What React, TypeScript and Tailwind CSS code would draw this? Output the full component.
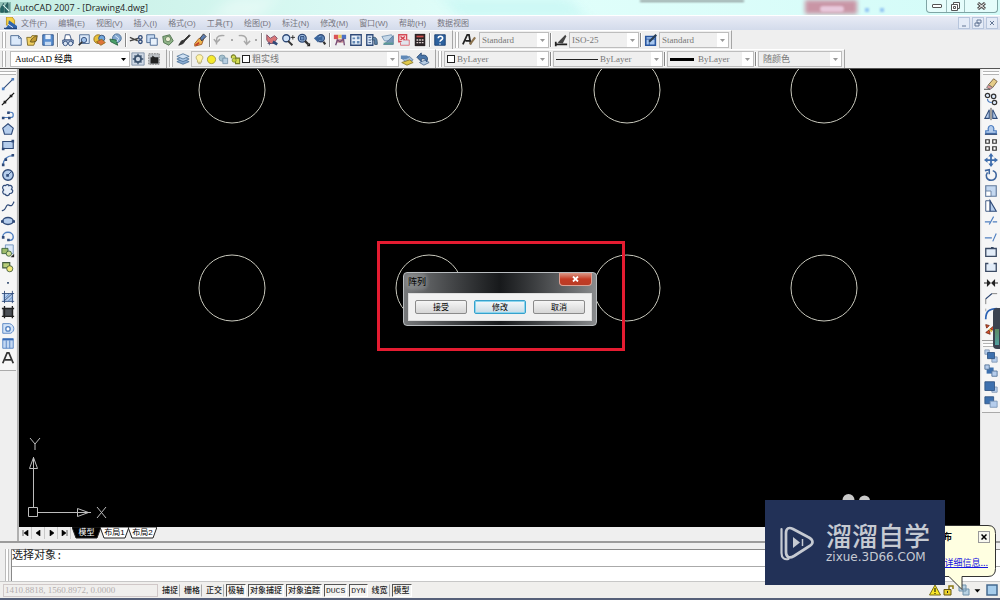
import type { ReactNode } from "react";

const N = "#2f4a78";
const B = "#4f7fc0";
const L = "#b5cdec";

const glyphs: Record<string, ReactNode> = {
  new: <path d="M2 3h9l3 3v8H2z M11 3v3h3" fill="#dbe9fa" stroke="#44648f" />,
  open: (
    <>
      <path d="M2 5h5l1-2h5v3l-3 8H3z" fill="#f0cf62" stroke="#7b6722" />
      <path d="M6 10c2-5 5-6 8-7l-1 6c-2 1-4 2-7 1z" fill="#c29b33" stroke="#5d4d18" />
    </>
  ),
  save: (
    <>
      <path d="M2 2h12v12H2z" fill="#5a8fd0" stroke="#284f85" />
      <path d="M5 2h6v5H5z" fill="#e8f1fb" />
      <path d="M4.500 10h7v4h-7z" fill="#c7daf0" />
    </>
  ),
  print: (
    <>
      <path d="M5 2h5l2 6H4z" fill="#fff" stroke={N} />
      <path d="M2 8h12v4H2z" fill="#a9bcd9" stroke={N} />
      <circle cx="5" cy="12" r="2.500" fill="#dbe5f3" stroke={N} />
      <circle cx="11" cy="12" r="2.500" fill="#dbe5f3" stroke={N} />
    </>
  ),
  preview: (
    <>
      <path d="M3 2h11v10H3z" fill="#dbe8f8" stroke="#47658f" />
      <circle cx="8" cy="8" r="3" fill="#9fc0e8" stroke={N} />
      <path d="M6 10l-4 4" stroke="#333" strokeWidth="2" />
    </>
  ),
  publish: (
    <>
      <circle cx="6" cy="7" r="5" fill="#e9c23b" stroke="#8f6a1c" />
      <circle cx="10" cy="6" r="3.500" fill="#72a7dc" stroke={N} />
      <path d="M4 10l5 4 5-3-4-4z" fill="#df7438" stroke="#8f6a1c" />
    </>
  ),
  dwf: (
    <>
      <circle cx="9" cy="6" r="5" fill="#82a7cf" stroke="#476c93" />
      <path d="M1 7l7 1 2 6-8-4z" fill="#4b9f69" stroke="#286341" />
      <path d="M7 3l4 3-2 4" stroke="#dfedfa" fill="none" />
    </>
  ),
  cut: (
    <>
      <path d="M1 5l9 4M1 9l10-3" stroke="#444" strokeWidth="1.500" />
      <circle cx="13" cy="5" r="2" fill="none" stroke={N} strokeWidth="1.500" />
      <circle cx="13" cy="10" r="2" fill="none" stroke={N} strokeWidth="1.500" />
    </>
  ),
  copy: (
    <>
      <path d="M2 2h9v9H2z" fill="#c9dcf3" stroke="#44648f" />
      <path d="M6 6h8v8H6z" fill="#e8f1fb" stroke="#44648f" />
    </>
  ),
  paste: (
    <>
      <path d="M2 4l8-2 4 7-5 5-6-3z" fill="#8eb387" stroke="#4c6e4a" />
      <circle cx="8" cy="7" r="3" fill="#e8ecd1" stroke="#5d7b57" />
    </>
  ),
  match: <path d="M14 2L8 8l-3 1-3 5 5-2 2-3 6-6z" fill="#333" stroke="#333" />,
  block: (
    <>
      <path d="M2 12l5-6 5 1-2 6-8 2z" fill="#edb44d" stroke="#9a5422" />
      <path d="M8 6l4-5 3 3-5 5z" fill="#5c7db2" stroke="#333" />
      <path d="M3 14l4-3" stroke="#c53b29" strokeWidth="2" />
    </>
  ),
  undo: <path d="M4 13V8c0-4 4-6 9-5M1 7l3 4 4-4" stroke="#a8a8a8" strokeWidth="1.700" fill="none" />,
  redo: <path d="M2 3c6-1 9 1 9 6v4M8 9l3 4 4-4" stroke="#a8a8a8" strokeWidth="1.700" fill="none" />,
  pan: (
    <>
      <path d="M2 2l4 4 5-3 3 3-4 6H5L2 8z" fill="#d97778" stroke="#7b4f68" />
      <path d="M9 10l5 3" stroke={N} strokeWidth="3" />
      <path d="M3 12h4M5 10v4" stroke="#557" />
    </>
  ),
  zoomrt: (
    <>
      <circle cx="6" cy="6" r="4" fill="#cfe2f8" stroke={N} strokeWidth="1.500" />
      <path d="M8 9l5 5" stroke="#333" strokeWidth="2.200" />
      <path d="M11 5h5M13.500 2.500v5" stroke="#222" />
    </>
  ),
  zoomwin: (
    <>
      <circle cx="6" cy="6" r="4.500" fill="#a8c6e9" stroke={N} strokeWidth="1.500" />
      <path d="M4 4h4v4H4z" fill="#6f93c4" stroke={N} />
      <path d="M9 9l4 4" stroke="#333" strokeWidth="2.500" />
      <path d="M11 15h4v-4z" />
    </>
  ),
  zoomprev: (
    <>
      <circle cx="9" cy="6" r="4" fill="#83abd9" stroke={N} strokeWidth="1.500" />
      <path d="M12 10l2 3" stroke="#333" strokeWidth="2.500" />
      <path d="M1 6l5-4v3l5-2v6L6 8v3z" fill="#3d679d" />
    </>
  ),
  props: (
    <>
      <path d="M1 2h5v5H1z" fill="#d95357" />
      <path d="M6 2h4v4H6z" fill="#e8c657" />
      <path d="M10 2h5v5h-5z" fill="#4e71c2" />
      <path d="M4 7h8v4H4z" fill="#c98a8e" />
      <path d="M3 14l2-6 3 2 4-3 1 7" stroke="#744b75" strokeWidth="1.500" fill="none" />
    </>
  ),
  dc: (
    <>
      <path d="M2 2h12v12H2z" fill="#e9f1fa" stroke={N} strokeWidth="1.500" />
      <path d="M4 5h3v2H4zM4 9h3v3H4zM9 4h3v3H9zM9 9h3v3H9z" fill="#6489b4" />
    </>
  ),
  palette: (
    <>
      <path d="M2 2h7v12H2z" fill="#dceafa" stroke={N} strokeWidth="1.500" />
      <path d="M4 5h3M4 8h3M4 11h3" stroke={N} />
      <path d="M9 5c5-1 5 4 5 8h-3V8H8z" fill="#6186ad" stroke="#34506d" />
    </>
  ),
  sheet: (
    <>
      <path d="M1 4l11-2 2 4-5 3H4z" fill="#c5d8e8" stroke="#7393b2" />
      <path d="M14 3v10H3l5-4z" fill="#7998b8" stroke="#54779b" />
      <path d="M3 12h11" stroke="#5c9b93" strokeWidth="2" />
    </>
  ),
  markup: (
    <>
      <path d="M2 2h9v8H2z" fill="#f8dfe1" stroke="#d34b57" strokeWidth="1.500" />
      <path d="M4 4l5 4M9 4L4 8" stroke="#d13c4a" strokeWidth="1.500" />
      <path d="M7 8h7v6H4v-3" fill="#e1e5ed" stroke="#dc6871" />
    </>
  ),
  calc: (
    <>
      <path d="M2 1h12v14H2z" fill="#2b2426" />
      <path d="M4 3h8v2H4z" fill="#c94b4a" />
      <path d="M4 8h8M4 11h8" stroke="#e2d5d5" strokeWidth="1.500" strokeDasharray="2 1" />
    </>
  ),
  help: (
    <>
      <path d="M2 2h12v12H2z" fill="#2d629f" stroke="#183e6f" />
      <path d="M6 6c0-3 5-3 5 0 0 2-3 2-3 4M8 12v1" fill="none" stroke="#fff" strokeWidth="1.800" />
    </>
  ),
  textstyle: (
    <>
      <path d="M1 13L6 2h2l2 11M4 9h5" stroke="#222" strokeWidth="2" fill="none" />
      <path d="M9 13l6-8" stroke="#8d7450" strokeWidth="2.500" />
    </>
  ),
  dimstyle: (
    <>
      <path d="M1 13h14M2 10v5" stroke="#222" strokeWidth="2" />
      <path d="M4 11l9-9 1 2-4 8z" fill="#444" />
    </>
  ),
  tablestyle: (
    <>
      <path d="M2 4h11v10H2z" fill="#a9c8f0" stroke="#2a57a0" strokeWidth="1.800" />
      <path d="M2 7h11M6 7v7" stroke="#2a57a0" />
      <path d="M6 10l8-8" stroke="#253c55" strokeWidth="2.500" />
    </>
  ),
  gear: (
    <>
      <path d="M1 1h14v14H1z" fill="#ced8e5" stroke="#7c8ea5" />
      <circle cx="8" cy="8" r="3.500" fill="none" stroke="#3b526d" strokeWidth="2" />
      <path d="M8 2v3M8 11v3M2 8h3M11 8h3M4 4l2 2M10 10l2 2M12 4l-2 2M6 10l-2 2" stroke="#3b526d" strokeWidth="1.500" />
    </>
  ),
  workspace: (
    <>
      <path d="M2 2h12v12H2z" fill="#bfc3c8" stroke="#777" strokeDasharray="2 1" />
      <path d="M4 6h2V4l3 2h4v7H4z" fill="#222" />
    </>
  ),
  layers: (
    <>
      <path d="M1 11l7-3 7 3-7 3z" fill="#89abd2" stroke="#54789e" />
      <path d="M1 8l7-3 7 3-7 3z" fill="#a9c5e4" stroke="#54789e" />
      <path d="M1 5l7-3 7 3-7 3z" fill="#d0e1f3" stroke="#54789e" />
    </>
  ),
  layerprev: (
    <>
      <path d="M3 8l8-3 4 4-7 4z" fill="#9db8d6" stroke="#6180a3" />
      <path d="M2 12l9-3 4 3-7 3z" fill="#e1c949" stroke="#887a32" />
      <path d="M1 4h7l3 2-4 2H1z" fill="#6089b7" />
    </>
  ),
  layerback: (
    <>
      <path d="M4 12l7-3 4 3-6 3z" fill="#b8cde4" stroke="#526e92" />
      <path d="M1 6l5-5v3c6-2 9 3 6 7-1-3-3-4-6-3v3z" fill="#4975a8" stroke="#2a4b77" />
    </>
  ),
  bulb: <path d="M5 12V9C1 5 4 1 8 1s7 4 3 8v3zM6 14h4" fill="#fff4a6" stroke="#a6984c" />,
  sun: <circle cx="8" cy="8" r="6" fill="#f5e92c" stroke="#898236" />,
  vpfreeze: (
    <>
      <circle cx="6" cy="6" r="4.500" fill="#a7c2cf" stroke="#6f8d9f" />
      <path d="M7 6h7v8H7z" fill="#b8cfe1" stroke="#65859f" />
    </>
  ),
  lock: (
    <>
      <path d="M2 6V3c3-3 6-2 7 3M8 6h6v8H8z" fill="#d5dd55" stroke="#737c22" strokeWidth="1.500" />
      <circle cx="6" cy="9" r="3" fill="#c7d341" stroke="#768023" />
    </>
  ),
  line: <><path d="M3 13L13 3" stroke={N} strokeWidth="1.300" /><path d="M1 12h3v3H1zM12 1h3v3h-3z" fill={B} /></>,
  xline: <><path d="M1 15L15 1" stroke="#111" strokeWidth="1.500" /><path d="M3 10h3v3H3zM10 3h3v3h-3z" fill="#222" /></>,
  pline: <><path d="M2 12h9c4 0 4-6 0-6H8" stroke={B} strokeWidth="1.400" fill="none" /><path d="M1 11h3v3H1zM8 11h3v3H8zM7 5h3v3H7z" fill={N} /></>,
  polygon: <path d="M8 2l6 5-2 7H4L2 7z" fill={L} stroke={N} strokeWidth="1.300" />,
  rect: <><path d="M2 4h12v8H2z" fill={L} stroke={N} strokeWidth="1.300" /><path d="M1 11h3v3H1zM12 2h3v3h-3z" fill={N} /></>,
  arc: <><path d="M2 14C3 7 7 3 14 3" stroke={B} strokeWidth="1.300" fill="none" /><path d="M1 12h3v3H1zM4 6h3v3H4zM12 1h3v3h-3z" fill={N} /></>,
  circle: <><circle cx="8" cy="8" r="6" fill={L} stroke={N} strokeWidth="1.500" /><path d="M8 8l4-4" stroke={N} /><path d="M6 7h3v3H6z" fill={N} /></>,
  cloud: <path d="M5 3c2-2 4-1 4 0 3-1 5 2 3 4 3 2 1 5-2 5-1 3-4 3-5 1-3 0-4-3-2-5C0 5 3 2 5 3z" fill="#e8eff9" stroke={N} strokeWidth="1.400" />,
  spline: <path d="M1 13c5 2 4-8 8-6s4-1 6-4" stroke={N} strokeWidth="1.300" fill="none" />,
  ellipse: <><ellipse cx="8" cy="8" rx="6" ry="4" fill={L} stroke={N} strokeWidth="1.600" /><path d="M0 7h3v3H0zM13 7h3v3h-3z" fill={N} /></>,
  earc: <><path d="M2 9c0-7 12-7 12 0 0 3-2 4-5 4" stroke={B} strokeWidth="1.600" fill="none" /><path d="M1 8h3v3H1zM7 11h3v3H7z" fill={N} /></>,
  insert: <><path d="M5 1h9v10H5z" fill="#dce9f9" stroke="#6c8fb8" /><path d="M1 5h7v6H1z" fill="#9dbb6b" stroke="#3c613b" /><circle cx="9" cy="11" r="3" fill="#d1df97" stroke="#3c613b" /><path d="M11 15h4v-4z" /></>,
  makeblock: <><path d="M2 3h8v6H2z" fill="#b8ce78" stroke="#405c3c" strokeWidth="1.300" /><circle cx="10" cy="10" r="3.500" fill="#f1e879" stroke="#405c3c" /></>,
  point: <path d="M7 8h2v2H7z" fill="#334b70" />,
  hatch: <><path d="M2 4h12v9H2z" fill={L} /><path d="M4 1v14M13 1v14M1 4h14M1 13h14M3 13L13 4" stroke={N} /><path d="M5 9l5-5M8 13l5-5" stroke={B} /></>,
  gradient: <><path d="M2 4h12v9H2z" fill="#4b4f55" /><path d="M4 1v14M13 1v14M1 4h14M1 13h14" stroke="#222" strokeWidth="1.500" /></>,
  region: <><path d="M2 3h8c6 2 6 9 1 11H2z" fill="#d3e3f7" stroke={B} /><circle cx="8" cy="9" r="2.500" fill="#fff" stroke={B} strokeWidth="1.500" /></>,
  table: <><path d="M2 3h12v11H2z" fill="#c4d8f2" stroke={B} /><path d="M2 4h12" stroke="#386bb6" strokeWidth="2" /><path d="M6 5v9M10 5v9" stroke={B} /></>,
  text: <path d="M2 14L7 2h2l5 12M4.500 10h7" stroke="#333" strokeWidth="2" fill="none" />,
  erase: <><path d="M5 9l5 3 5-7-4-3z" fill="#e5cc87" stroke="#745e3d" /><path d="M5 9l5 3-3 2-4-2z" fill="#de9a9a" stroke="#777" /><path d="M0 14h7" stroke="#333" /></>,
  cpy: <><circle cx="4" cy="4" r="2.500" fill="#dce9f9" stroke="#333" strokeWidth="1.400" /><circle cx="11" cy="5" r="2.500" fill="#dce9f9" stroke="#333" strokeWidth="1.400" /><circle cx="12" cy="12" r="2.500" fill="#dce9f9" stroke="#333" strokeWidth="1.400" /><path d="M4 8c0 3 2 4 5 4" fill="none" stroke={B} strokeWidth="1.400" /></>,
  mirror: <><path d="M6 3v10H1zM10 3v10h5z" fill={L} stroke={N} strokeWidth="1.200" /><path d="M8 1v14" stroke="#333" /></>,
  offset: <><path d="M2 13h12v-3h-3c2-8-8-8-6 0H2z" fill={L} stroke={B} strokeWidth="1.400" /><path d="M1 14h14" stroke={N} strokeWidth="1.500" /></>,
  array: <path d="M2 2h4v4H2zM10 2h4v4h-4zM2 10h4v4H2zM10 10h4v4h-4z" fill="#fff" stroke="#333" strokeWidth="1.400" />,
  move: <path d="M8 0l3 4H9v3h3V5l4 3-4 3V9H9v3h2l-3 4-3-4h2V9H4v2L0 8l4-3v2h3V4H5z" fill="#3e6dac" />,
  rotate: <path d="M4 5c-3 4-1 9 4 9 7 0 8-9 2-11M1 3l5-1v5" stroke="#3d659e" strokeWidth="1.800" fill="none" />,
  scale: <><path d="M2 2h12v12H2z" fill="#c4d8f0" stroke="#60799b" strokeWidth="1.300" /><path d="M2 8h6v6H2z" fill="#fff" stroke="#60799b" /></>,
  stretch: <><path d="M2 2h5v12H2z" fill="#fff" stroke={N} /><path d="M7 2l7 12H7z" fill={L} stroke={N} strokeWidth="1.300" /></>,
  trim: <path d="M1 9h6M10 9h5M6 12l5-9" stroke={B} strokeWidth="1.300" />,
  extend: <path d="M1 9h8M10 13l4-9" stroke={B} strokeWidth="1.300" />,
  breakpt: <path d="M2 4h12v9H2zM8 3h3" fill="#e2ecf8" stroke="#3b4a63" strokeWidth="1.500" />,
  brk: <path d="M5 4H2v9h12V4h-3" fill="#e2ecf8" stroke="#3b4a63" strokeWidth="1.500" />,
  join: <path d="M0 8h5M11 8h5M4 5l3 3-3 3zM12 5L9 8l3 3z" stroke="#222" strokeWidth="1.300" />,
  chamfer: <><path d="M2 15V9l7-6h6" stroke="#777" fill="none" /><path d="M2 9l7-6" stroke={N} strokeWidth="1.500" /></>,
  fillet: <><path d="M2 15C2 6 6 3 15 3" stroke="#2b62b4" strokeWidth="2" fill="none" /><path d="M2 3v3" stroke="#999" /></>,
  explode: <><path d="M2 12l4-3 1 5zM7 8l7-6-2 8zM2 3l4 1-3 3z" fill="#db4d27" stroke="#742d1c" /><path d="M6 8l3 3" stroke="#dfad34" strokeWidth="2" /></>,
  order1: <><path d="M9 9h6v6H9zM1 1h5v5H1z" fill={L} stroke="#8297b2" /><path d="M4 4h8v7H4z" fill="#3d70ae" stroke="#315584" /></>,
  order2: <><path d="M3 4h8v7H3z" fill="#3d70ae" /><path d="M1 1h5v5H1zM9 8h6v6H9z" fill={L} stroke="#527297" /></>,
  order3: <><path d="M9 8h6v6H9z" fill={L} stroke="#8297b2" /><path d="M1 2h11v10H1z" fill="#3d70ae" stroke="#315584" /></>,
  order4: <><path d="M1 2h10v8H1z" fill="#3d70ae" stroke="#315584" /><path d="M7 7h8v7H7z" fill={L} stroke="#7894b5" /></>,
};

function Tool({ name, label }: { name: string; label: string }) {
  return (
    <button type="button" aria-label={label} className="flex h-[15px] w-4 shrink-0 items-center justify-center">
      <svg viewBox="0 0 16 16" className="size-3.5" fill="#222" aria-hidden="true">
        {glyphs[name]}
      </svg>
    </button>
  );
}

const Sep = () => <span className="mx-px h-3.5 w-0.5 shrink-0 border-r border-white bg-[#888]" />;
const Grip = () => <span className="mr-0.5 h-4 w-1 shrink-0 border-x border-[#b4b4b4] bg-white" />;

function Bar({ children }: { children: ReactNode }) {
  return (
    <div className="flex h-[19px] shrink-0 items-center border-t border-r border-t-white border-r-[#a5a5a5] pl-0.5">
      <Grip />
      {children}
    </div>
  );
}

function Combo(props: { label: string; value: string; width: string; lead?: ReactNode; dark?: boolean; cjk?: boolean }) {
  const tone = props.dark ? "bg-white text-black" : "bg-[#efefef] text-[#777]";
  const face = props.cjk ? "font-['Noto_Sans_CJK_SC',sans-serif] text-[9px]" : "font-['Liberation_Serif','Noto_Sans_CJK_SC',serif] text-[9px]";
  return (
    <label className={`flex h-4 shrink-0 items-center border border-[#bdbdbd] pl-0.5 ${tone} ${props.width}`}>
      {props.lead}
      <select aria-label={props.label} className={`h-3.5 min-w-0 flex-1 appearance-none bg-transparent leading-[14px] outline-none ${face}`}>
        <option>{props.value}</option>
      </select>
      <span className="flex h-3.5 w-[11px] items-center justify-center bg-white">
        <svg viewBox="0 0 5 3" className="h-[3px] w-[5px]" fill={props.dark ? "#000" : "#999"} aria-hidden="true">
          <path d="M0 0h5L2.500 3z" />
        </svg>
      </span>
    </label>
  );
}

const menus = ["文件(F)", "编辑(E)", "视图(V)", "插入(I)", "格式(O)", "工具(T)", "绘图(D)", "标注(N)", "修改(M)", "窗口(W)", "帮助(H)", "数据视图"];
const std1 = [["new", "新建"], ["open", "打开"], ["save", "保存"]];
const std2 = [["print", "打印"], ["preview", "打印预览"], ["publish", "发布"], ["dwf", "三维 DWF"]];
const std3 = [["cut", "剪切"], ["copy", "复制"], ["paste", "粘贴"], ["match", "特性匹配"], ["block", "块编辑器"]];
const std4 = [["pan", "平移"], ["zoomrt", "实时缩放"], ["zoomwin", "窗口缩放"], ["zoomprev", "缩放上一个"]];
const std5 = [["props", "特性"], ["dc", "设计中心"], ["palette", "工具选项板"], ["sheet", "图纸集"], ["markup", "标记集"], ["calc", "计算器"]];
const draw = [["line", "直线"], ["xline", "构造线"], ["pline", "多段线"], ["polygon", "正多边形"], ["rect", "矩形"], ["arc", "圆弧"], ["circle", "圆"], ["cloud", "修订云线"], ["spline", "样条曲线"], ["ellipse", "椭圆"], ["earc", "椭圆弧"], ["insert", "插入块"], ["makeblock", "创建块"], ["point", "点"], ["hatch", "图案填充"], ["gradient", "渐变色"], ["region", "面域"], ["table", "表格"], ["text", "多行文字"]];
const modify = [["erase", "删除"], ["cpy", "复制对象"], ["mirror", "镜像"], ["offset", "偏移"], ["array", "阵列"], ["move", "移动"], ["rotate", "旋转"], ["scale", "缩放"], ["stretch", "拉伸"], ["trim", "修剪"], ["extend", "延伸"], ["breakpt", "打断于点"], ["brk", "打断"], ["join", "合并"], ["chamfer", "倒角"], ["fillet", "圆角"], ["explode", "分解"]];
const order = [["order1", "前置"], ["order2", "后置"], ["order3", "置于对象之上"], ["order4", "置于对象之下"]];
const modes: [string, boolean][] = [["捕捉", false], ["栅格", false], ["正交", false], ["极轴", true], ["对象捕捉", true], ["对象追踪", true], ["DUCS", true], ["DYN", true], ["线宽", false], ["模型", true]];

const Tools = ({ items }: { items: string[][] }) => (
  <>
    {items.map(([name, label]) => (
      <Tool key={name} name={name} label={label} />
    ))}
  </>
);

const Swatch = () => <span className="mr-0.5 size-2 shrink-0 border border-[#222] bg-white" />;
const HGrip = () => <span className="mb-px h-1 w-4 shrink-0 border-y border-[#b4b4b4] bg-white" />;

function TitleBar() {
  return (
    <header className="relative flex h-[15px] shrink-0 items-center overflow-hidden bg-linear-to-r from-[#c6eee4] via-[#e2fffb] to-[#d3fbf8]">
      <span className="absolute top-0 left-[22%] h-4 w-12 -skew-x-[40deg] bg-white/50 blur-sm" />
      <span className="absolute top-0 left-[45%] h-4 w-32 skew-x-[40deg] bg-[#c5f6f3] blur-sm" />
      <span className="absolute top-0 left-[64%] h-0.5 w-26 bg-[#8b9695] blur-[1px]" />
      <span className="absolute top-0 left-[80.5%] h-3.5 w-[52px] bg-[#c995a5] blur-[2px]" />
      <span className="absolute top-1.5 left-[82%] h-1.5 w-6 rounded bg-[#e8c9dc] blur-[1px]" />
      <span className="absolute top-2 left-[86.500%] size-1 bg-[#93c4f2] blur-[1px]" />
      <span className="absolute top-2 left-[88%] size-1 bg-[#93c4f2] blur-[1px]" />
      <svg viewBox="0 0 16 16" className="relative size-[11px]" aria-hidden="true">
        <path d="M0 0h16v16H0z" fill="#8fc0b5" />
        <path d="M1 15V9l4-7v13zM7 15V7l4-6v14zM13 2v13" fill="#266a68" stroke="#17484b" />
        <path d="M4 4l9 9" stroke="#e9fff9" strokeWidth="1.500" />
      </svg>
      <h1 className="relative ml-[3px] flex-1 font-['Open_Sans',sans-serif] text-[9px] leading-[15px] text-[#222]">AutoCAD 2007 - [Drawing4.dwg]</h1>
      <div className="relative mr-0.5 flex h-[13px] self-start rounded-b border border-t-0 border-[#7fa5a5] bg-white/40">
        <button type="button" aria-label="最小化" className="flex w-5 items-center justify-center border-r border-[#9bbcbc]">
          <span className="h-1 w-2.5 rounded-[1px] border border-[#555] bg-white" />
        </button>
        <button type="button" aria-label="还原" className="flex w-[18px] items-center justify-center border-r border-[#9bbcbc]">
          <svg viewBox="0 0 9 9" className="size-[9px]" fill="#fff" stroke="#555" aria-hidden="true">
            <path d="M2.500.5h6v6h-6z" />
            <path d="M.5 2.500h6v6h-6z" />
            <path d="M2.500 4.500h2v2h-2z" />
          </svg>
        </button>
        <button type="button" aria-label="关闭" className="flex w-8 items-center justify-center">
          <svg viewBox="0 0 9 8" className="h-2 w-[9px]" aria-hidden="true">
            <path d="M1 1l7 6M8 1L1 7" stroke="#555" strokeWidth="3" />
            <path d="M1.500 1.500l6 5M7.500 1.500l-6 5" stroke="#fff" />
          </svg>
        </button>
      </div>
    </header>
  );
}

function MenuBar() {
  return (
    <nav className="flex h-[15px] shrink-0 items-center border-t border-white bg-linear-to-b from-[#e9ecf6] to-[#d3dbeb] pl-1">
      <svg viewBox="0 0 16 16" className="mr-1 size-[13px] shrink-0" aria-hidden="true">
        <path d="M3 0h7l3 4v6H3z" fill="#f5cf43" stroke="#b28d21" />
        <path d="M6 4l10 7v4H1l4-5z" fill="#2f64ad" />
        <path d="M0 14h16" stroke="#24457c" strokeWidth="1.500" />
        <path d="M5 9l6 4" stroke="#eef" strokeWidth="1.200" />
      </svg>
      <ul className="flex flex-1 items-center gap-[11px] font-['Liberation_Sans','Noto_Sans_CJK_SC',sans-serif] text-[8px] leading-[13px] text-[#75757f]">
        {menus.map((m) => (
          <li key={m}>
            <button type="button" className="block whitespace-nowrap">{m}</button>
          </li>
        ))}
      </ul>
      <div className="mr-0.5 flex gap-0.5">
        {[["最小化图形", "M2 7h4"], ["还原图形", "M3 1h4v3H3zM1 4h4v3H1z"], ["关闭图形", "M2 2l4 4M6 2L2 6"]].map(([label, d]) => (
          <button key={label} type="button" aria-label={label} className="flex h-3 w-3 items-center justify-center border border-[#b7c5dc] bg-[#e4ebf7]">
            <svg viewBox="0 0 8 8" className="size-2" fill="none" stroke="#647795" aria-hidden="true">
              <path d={d} />
            </svg>
          </button>
        ))}
      </div>
    </nav>
  );
}

function ArrayDialog() {
  return (
    <section role="dialog" aria-label="阵列" className="absolute top-[203px] left-[384px] flex h-[54px] w-[194px] flex-col rounded border border-[#b9bdc0] bg-linear-to-r from-[#77797b] via-[#17191b] to-[#898b8d] px-1 pb-1">
      <div className="flex h-5 items-start">
        <h2 className="flex-1 pt-0.5 font-['Noto_Sans_CJK_SC',sans-serif] text-[9px] leading-[14px] text-black">
          <span className="rounded bg-white/15 shadow-[0_0_3px_2px_rgba(255,255,255,0.15)]">阵列</span>
        </h2>
        <button type="button" aria-label="关闭" className="flex h-[13px] w-[33px] items-center justify-center rounded-b-sm border border-t-0 border-[#e0a092] bg-linear-to-b from-[#d99686] via-[#c33b24] to-[#b93b25]">
          <svg viewBox="0 0 7 6" className="h-1.5 w-[7px]" aria-hidden="true">
            <path d="M1 .5l5 5M6 .5l-5 5" stroke="#fff" strokeWidth="1.800" />
          </svg>
        </button>
      </div>
      <div className="flex flex-1 items-center justify-between border border-[#ddd] bg-[#f1f1f1] px-1.5 font-['Noto_Sans_CJK_SC',sans-serif] text-[8px] leading-3 text-black">
        <button type="button" className="h-3.5 w-[52px] rounded-xs border border-[#8b8b8b] bg-linear-to-b from-[#f6f6f6] to-[#d6d6d6]">接受</button>
        <button type="button" className="h-3.5 w-[52px] rounded-xs border border-[#36a1cc] bg-linear-to-b from-[#f3f8fb] to-[#c9dce6] ring-1 ring-[#8bd5ee] ring-inset">修改</button>
        <button type="button" className="h-3.5 w-[52px] rounded-xs border border-[#8b8b8b] bg-linear-to-b from-[#f6f6f6] to-[#d6d6d6]">取消</button>
      </div>
    </section>
  );
}

function Canvas() {
  return (
    <div className="relative min-h-0 flex-1 overflow-hidden bg-black">
      <svg className="absolute inset-0 size-full" fill="none" stroke="#c9c9bd" aria-label="图形">
        {[21, 219].map((cy) =>
          [213, 410, 608, 805].map((cx) => <circle key={`${cx}-${cy}`} cx={cx} cy={cy} r="33" />),
        )}
        <g stroke="#bdbdbd">
          <path d="M14.500 438V388M19 443.500h53" />
          <path d="M9.500 438.500h9v9h-9zM10.500 399.500l4-11 4 11zM58.500 439.500v8l11-4z" />
          <path d="M11 369l5 6 5-6M16 375v6M78 438l9 11M87 438l-9 11" />
        </g>
      </svg>
      <div className="absolute top-[172px] left-[358px] h-[110px] w-[248px] border-[3px] border-[#e51c31]" />
      <ArrayDialog />
    </div>
  );
}

function LayoutTabs() {
  return (
    <div className="flex h-3.5 shrink-0 items-start bg-[#efefef] font-['Liberation_Sans','Noto_Sans_CJK_SC',sans-serif] text-[8px] leading-3">
      {[["第一个", "M1 0v6M6 0v6L2 3z"], ["上一个", "M5 0v6L1 3z"], ["下一个", "M2 0v6l4-3z"], ["最后一个", "M6 0v6M1 0v6l4-3z"]].map(([label, d]) => (
        <button key={label} type="button" aria-label={label} className="flex h-3 w-[13px] items-center justify-center border-r border-[#c9c9c9]">
          <svg viewBox="0 0 7 6" className="h-1.5 w-[7px]" fill="#000" stroke="#000" strokeWidth=".6" aria-hidden="true">
            <path d={d} />
          </svg>
        </button>
      ))}
      <div className="ml-px flex">
        {[["模型", true], ["布局1", false], ["布局2", false]].map(([t, on]) => (
          <button key={String(t)} type="button" className={`relative -mr-px h-3 w-[29px] ${on ? "text-white" : "text-black"}`}>
            <svg viewBox="0 0 29 12" preserveAspectRatio="none" className="absolute inset-0 size-full" aria-hidden="true">
              <path d="M0 0l4 11h21l4-11z" fill={on ? "#000" : "#fff"} stroke="#222" />
            </svg>
            <span className="relative">{t}</span>
          </button>
        ))}
      </div>
    </div>
  );
}

function Watermark() {
  return (
    <div className="absolute right-[55px] bottom-[15px] flex h-[85px] w-[180px] items-center bg-[#223157] pl-[15px] text-[#c6cad2]">
      <svg viewBox="0 0 28 6" className="absolute -top-1.5 left-[77px] h-1.5 w-7" fill="#c9c9c9" aria-hidden="true">
        <ellipse cx="6.500" cy="6" rx="6" ry="6" />
        <ellipse cx="22.500" cy="7" rx="5.500" ry="5.500" />
      </svg>
      <svg viewBox="0 0 34 36" className="h-9 w-[34px] shrink-0" fill="none" stroke="currentColor" aria-hidden="true">
        <path d="M1.500 4v24c0 5 3 7 7 6" strokeWidth="2.200" strokeLinecap="round" />
        <path d="M6 8c0-5 3-6 7-4l15 8c6 3 6 7 0 10l-14 9c-5 3-8 1-8-4z" strokeWidth="2.700" />
        <path d="M13 12v11l7-5.500z" fill="currentColor" stroke="none" />
        <path d="M22.500 14v7" strokeWidth="1.500" />
      </svg>
      <div className="ml-3 pb-1">
        <p className="font-['Noto_Sans_CJK_SC',sans-serif] text-[26px] leading-8 font-medium whitespace-nowrap">溜溜自学</p>
        <p className="font-['DejaVu_Sans',sans-serif] text-[12px] leading-3 whitespace-nowrap">zixue.3D66.COM</p>
      </div>
    </div>
  );
}

function Balloon() {
  return (
    <aside className="absolute right-1 bottom-2 h-[67px] w-[100px]">
      <svg viewBox="0 0 100 67" className="absolute inset-0 size-full" aria-hidden="true">
        <path d="M8 .5h84q7.500 0 7.500 8v35q0 8-7.500 8H66v13L53 51.500H8z" fill="#ffffe1" stroke="#333" />
      </svg>
      <div className="relative flex items-center justify-between pt-[6px] pr-1.5 pl-[47px] font-['Noto_Sans_CJK_SC',sans-serif] text-[9px] leading-3 font-bold">
        布
        <button type="button" aria-label="关闭通知" className="flex size-3 items-center justify-center border border-[#999] bg-[#f8f8f0]">
          <svg viewBox="0 0 6 6" className="size-1.5" stroke="#000" strokeWidth="1.500" aria-hidden="true">
            <path d="M.5.5l5 5M5.500.5l-5 5" />
          </svg>
        </button>
      </div>
      <a href="#details" className="relative mt-3.5 mr-2 block text-right font-['Noto_Sans_CJK_SC',sans-serif] text-[9px] leading-3 text-[#1414e0] underline">
        详细信息...
      </a>
    </aside>
  );
}

function StatusBar() {
  return (
    <footer className="flex h-[17px] shrink-0 items-center border-t border-[#c7c7c7] bg-[#f0efed] pl-[3px]">
      <output className="mr-0.5 h-[13px] w-[155px] border border-[#d0c8c8] pl-px font-['Liberation_Serif',serif] text-[9px] leading-[11px] whitespace-pre text-[#b3aeae]">
        1410.8818, 1560.8972, 0.0000
      </output>
      <div className="flex gap-0.5 font-['Liberation_Mono','Noto_Sans_CJK_SC',monospace] text-[8px] leading-3 font-medium text-[#222]">
        {modes.map(([t, on]) => (
          <button
            key={t}
            type="button"
            aria-pressed={on}
            className={`h-[13px] border px-px whitespace-nowrap ${on ? "border-t-[#555] border-r-white border-b-white border-l-[#555] bg-[#f4f4f2]" : "border-transparent border-r-[#aaa]"}`}
          >
            {t}
          </button>
        ))}
      </div>
      <div className="ml-auto flex items-center gap-0.5 pr-0.5">
        <svg viewBox="0 0 12 12" className="size-3" aria-hidden="true">
          <path d="M6 1l5.500 10H.5z" fill="#f8e626" stroke="#776d19" />
          <path d="M6 4v4M6 9v1" stroke="#000" />
        </svg>
        <svg viewBox="0 0 12 12" className="size-3" aria-hidden="true">
          <path d="M6 6V2h4v3" stroke="#8b7912" strokeWidth="1.500" fill="none" />
          <path d="M1 5.500h7V11H1z" fill="#e8cf2d" stroke="#66570e" />
          <path d="M4.500 7v2" stroke="#222" />
        </svg>
        <svg viewBox="0 0 12 12" className="ml-px size-3" aria-hidden="true">
          <path d="M1 1h7v6H1zM5 5h6v6H5z" fill="#b9d2e3" stroke="#6e91aa" />
        </svg>
        <svg viewBox="0 0 12 12" className="mr-0.5 size-2.5" aria-hidden="true">
          <path d="M3 5h7L6.500 9z" />
        </svg>
        <svg viewBox="0 0 12 12" className="size-3" aria-hidden="true">
          <path d="M1 1h10v10H1z" fill="#a6cdec" stroke="#44698e" strokeWidth="1.500" />
        </svg>
      </div>
    </footer>
  );
}

export default function App() {
  return (
    <div className="relative flex h-screen flex-col overflow-hidden bg-[#efefef]">
      <TitleBar />
      <MenuBar />
      <div className="flex shrink-0">
        <Bar>
          <Tools items={std1} />
          <Sep />
          <Tools items={std2} />
          <Sep />
          <Tools items={std3} />
          <Sep />
          <Tool name="undo" label="放弃" />
          <span className="flex w-2 justify-center"><span className="size-0.5 bg-[#aaa]" /></span>
          <Tool name="redo" label="重做" />
          <span className="flex w-2 justify-center"><span className="size-0.5 bg-[#aaa]" /></span>
          <Sep />
          <Tools items={std4} />
          <Sep />
          <Tools items={std5} />
          <Sep />
          <Tool name="help" label="帮助" />
          <span className="w-1" />
        </Bar>
        <Bar>
          <Tool name="textstyle" label="文字样式" />
          <span className="w-0.5" />
          <Combo label="文字样式" value="Standard" width="w-[70px]" />
          <Sep />
          <Tool name="dimstyle" label="标注样式" />
          <Combo label="标注样式" value="ISO-25" width="w-[70px]" />
          <Sep />
          <Tool name="tablestyle" label="表格样式" />
          <Combo label="表格样式" value="Standard" width="w-[70px]" />
          <span className="w-0.5" />
        </Bar>
      </div>
      <div className="flex shrink-0">
        <Bar>
          <span className="w-0.5" />
          <Combo label="工作空间" value="AutoCAD 经典" width="w-[120px]" lead={<span className="w-0.5" />} dark />
          <Tool name="gear" label="工作空间设置" />
          <Tool name="workspace" label="我的工作空间" />
          <span className="w-1" />
        </Bar>
        <Bar>
          <Tool name="layers" label="图层特性管理器" />
          <Combo
            label="图层"
            value="粗实线"
            width="w-[208px]"
            cjk
            lead={
              <>
                {["bulb", "sun", "vpfreeze", "lock"].map((n) => (
                  <svg key={n} viewBox="0 0 16 16" className="mr-px size-[11px] shrink-0" aria-hidden="true">
                    {glyphs[n]}
                  </svg>
                ))}
                <Swatch />
              </>
            }
          />
          <Tool name="layerprev" label="将对象的图层置为当前" />
          <Tool name="layerback" label="上一个图层" />
          <span className="w-1" />
        </Bar>
        <Bar>
          <Combo label="颜色" value="ByLayer" width="w-[105px]" lead={<Swatch />} />
          <Sep />
          <Combo label="线型" value="ByLayer" width="w-[110px]" lead={<span className="mr-0.5 h-px w-[42px] bg-[#222]" />} />
          <Sep />
          <Combo label="线宽" value="ByLayer" width="w-[87px]" lead={<span className="mr-1 h-[3px] w-6 bg-black" />} />
          <Sep />
          <Combo label="打印样式" value="随颜色" width="w-[84px]" lead={<span className="w-0.5" />} cjk />
          <span className="w-0.5" />
        </Bar>
      </div>
      <main className="flex min-h-0 flex-1 border-t border-[#555]">
        <div className="flex w-[19px] shrink-0 flex-col items-center border-r-2 border-[#b0b0b0] bg-[#efefef] pr-px">
          <div className="flex w-full flex-col items-center border-b border-[#aaa] bg-[#f6f6f6] pt-0.5">
            <HGrip />
            <div className="flex h-[294px] flex-col justify-between pb-1">
              <Tools items={draw} />
            </div>
          </div>
        </div>
        <div className="flex min-w-0 flex-1 flex-col">
          <Canvas />
          <LayoutTabs />
        </div>
        <div className="w-5 shrink-0 border-l border-[#ddd] pl-px">
          <div className="flex flex-col items-center border-b border-[#aaa] bg-[#f6f6f6] pt-0.5">
            <HGrip />
            <div className="flex h-[260px] flex-col justify-between">
              <Tools items={modify} />
            </div>
            <span className="mt-1 mb-0.5 w-full border-t border-[#999]" />
            <HGrip />
            <div className="flex h-16 flex-col justify-between pb-0.5">
              <Tools items={order} />
            </div>
          </div>
        </div>
      </main>
      <section className="flex h-10 shrink-0 flex-col border-t-2 border-[#9b9b9b] pl-[5px]">
        <div className="h-1.5" />
        <div className="flex min-h-0 flex-1">
          <span className="mr-0.5 w-1 border-x border-[#bbb] bg-white" />
          <div className="flex flex-1 flex-col border-t border-l border-[#888] bg-white font-['Liberation_Mono','Noto_Sans_CJK_SC',monospace] text-[11px] text-[#222]">
            <p className="h-4 leading-[12px]">选择对象:</p>
            <input aria-label="命令行" className="min-h-0 w-full flex-1 border-t border-[#aaa] bg-white outline-none" />
          </div>
        </div>
      </section>
      <StatusBar />
      <div className="h-0.5 shrink-0 bg-[#566079]" />
      <div className="absolute top-[308px] right-0 flex h-[41px] w-[7px] items-end justify-center rounded-l bg-[#3b4350] pb-1">
        <span className="h-4 w-1 bg-linear-to-b from-[#5d8b62] to-[#4fa0a0]" />
      </div>
      <Balloon />
      <Watermark />
    </div>
  );
}
